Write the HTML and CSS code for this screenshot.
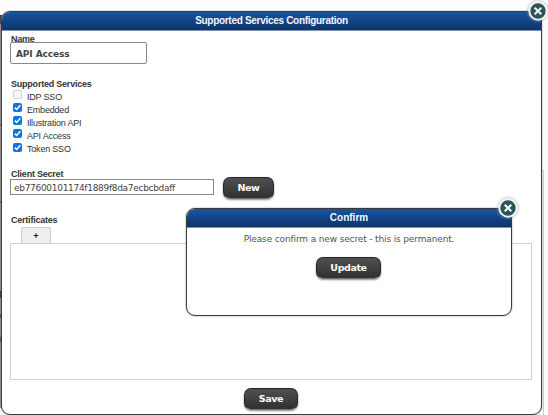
FILE: index.html
```html
<!DOCTYPE html>
<html lang="en">
<head>
<meta charset="utf-8">
<title>Supported Services Configuration</title>
<link rel="stylesheet" href="styles.css">
</head>
<body>
<div class="backdrop-left"></div>
<div class="backdrop-right"></div>
<main class="dialog">
  <header class="bar"><span class="title-main">Supported Services Configuration</span></header>
  <button class="close" aria-label="Close"><svg viewBox="0 0 20 20"><circle cx="10" cy="10" r="8.7"/><path d="M6.7 6.7l6.6 6.6M13.3 6.7l-6.6 6.6"/></svg></button>
  <form class="content">
    <section class="name">
      <label class="label">Name</label>
      <div class="field name-field"><span>API Access</span></div>
    </section>
    <section class="services">
      <div class="label">Supported Services</div>
      <div class="option"><i class="box off"></i><span>IDP SSO</span></div>
      <div class="option"><i class="box"><svg viewBox="0 0 9 9"><path d="M1.8 4.6l1.9 1.9 3.6-4.3"/></svg></i><span>Embedded</span></div>
      <div class="option"><i class="box"><svg viewBox="0 0 9 9"><path d="M1.8 4.6l1.9 1.9 3.6-4.3"/></svg></i><span>Illustration API</span></div>
      <div class="option"><i class="box"><svg viewBox="0 0 9 9"><path d="M1.8 4.6l1.9 1.9 3.6-4.3"/></svg></i><span>API Access</span></div>
      <div class="option"><i class="box"><svg viewBox="0 0 9 9"><path d="M1.8 4.6l1.9 1.9 3.6-4.3"/></svg></i><span>Token SSO</span></div>
    </section>
    <section class="secret">
      <div class="secret-col">
        <label class="label">Client Secret</label>
        <div class="field secret-field"><span>eb77600101174f1889f8da7ecbcbdaff</span></div>
      </div>
      <button type="button" class="btn new">New</button>
    </section>
    <section class="certs">
      <div class="label">Certificates</div>
      <div class="tab">+</div>
      <div class="panel"></div>
    </section>
    <button type="button" class="btn save">Save</button>
  </form>
</main>
<aside class="dialog confirm">
  <header class="bar"><span>Confirm</span></header>
  <button class="close" aria-label="Close"><svg viewBox="0 0 20 20"><circle cx="10" cy="10" r="8.7"/><path d="M6.7 6.7l6.6 6.6M13.3 6.7l-6.6 6.6"/></svg></button>
  <p class="message">Please confirm a new secret - this is permanent.</p>
  <button type="button" class="btn update">Update</button>
</aside>
</body>
</html>
```
FILE: styles.css
```css
* { box-sizing: border-box; }
body {
  margin: 0;
  height: 415px;
  padding: 11px 0 0 1px;
  overflow: hidden;
  position: relative;
  background: #fefefe;
  font: 9px/12px "Liberation Sans", Arial, sans-serif;
  color: #222;
}
button { margin: 0; padding: 0; border: 0; background: none; }
.backdrop-left {
  position: absolute;
  left: 0;
  top: 15px;
  width: 3px;
  height: 393px;
  background: linear-gradient(#333 0 9px, transparent 9px 109px, #555 109px 111px, transparent 111px 186px, #555 186px 188px, transparent 188px 276px, #222 276px 283px, transparent 283px 299px, #444 299px 303px, transparent 303px 322px, #444 322px 327px, transparent 327px), #8b8b8b;
}
.backdrop-right {
  position: absolute;
  left: 541px;
  top: 170px;
  width: 3px;
  height: 245px;
  border-top: 1px solid #ccc;
  border-right: 1px solid #ccc;
}
.dialog {
  position: relative;
  width: 541px;
  height: 404px;
  border: 1px solid #3a3a3a;
  border-radius: 9px 0 9px 9px;
  background: #fff;
  box-shadow: 0 0 2px #999;
}
.bar {
  height: 19px;
  border-radius: 8px 0 0 0;
  border-bottom: 1px solid #7f94b4;
  background: linear-gradient(#1a54a1, #0d3468);
  color: #f4f6fa;
  font-weight: bold;
  font-size: 10px;
  line-height: 18px;
  text-align: center;
}
.title-main { letter-spacing: -.3px; }
.close {
  position: absolute;
  right: -7px;
  top: -11px;
  width: 20px;
  height: 20px;
  border-radius: 50%;
  box-shadow: 0 0 3px #999;
}
.close svg { display: block; width: 20px; height: 20px; }
.close circle { fill: #2c545c; stroke: #f0f2f2; stroke-width: 2; }
.close path { stroke: #f4f6f6; stroke-width: 2; fill: none; }
.content { padding: 1px 9px 0 8px; display: flex; flex-direction: column; }
.label {
  display: block;
  height: 10px;
  padding-left: 1px;
  color: #333;
  font-weight: bold;
  line-height: 12px;
  letter-spacing: -.22px;
}
.field {
  display: flex;
  align-items: center;
  border: 1px solid #888;
  color: #444;
  font-family: "DejaVu Sans", Verdana, sans-serif;
}
.name { height: 46px; }
.name .label { line-height: 14px; }
.name-field { width: 137px; height: 22px; padding: 1px 0 0 5px; border-radius: 2px; font-weight: bold; letter-spacing: -.1px; }
.services { height: 90px; }
.option { height: 13.15px; display: flex; align-items: center; gap: 5px; padding-left: 3px; color: #333; letter-spacing: -.2px; }
.option span { padding-top: 4px; }
.box { width: 9px; height: 9px; border-radius: 2px; background: #0b75e8; }
.box.off { background: #f8f8f8; border: 1px solid #d2d2d2; }
.box svg { display: block; width: 9px; height: 9px; }
.box path { fill: none; stroke: #fff; stroke-width: 1.5; }
.secret { height: 46px; display: flex; gap: 9px; }
.secret-col { width: 204px; padding-top: 1px; }
.secret .label { height: 10px; line-height: 11px; }
.secret-field { height: 16px; padding: 1px 0 0 3px; letter-spacing: -.3px; }
.btn {
  flex: none;
  height: 22px;
  border: 1px solid #262626;
  border-bottom-color: #777;
  border-radius: 7px;
  background: linear-gradient(#505050, #303030);
  box-shadow: 0 1px 2px #888;
  color: #fff;
  font: bold 9.5px/20px "DejaVu Sans", Verdana, sans-serif;
  letter-spacing: -.4px;
  text-align: center;
}
.new { width: 51px; margin-top: 9px; }
.certs { height: 174px; }
.certs .label { height: 13px; line-height: 12px; }
.tab {
  width: 30px;
  height: 16px;
  margin-left: 11px;
  border: 1px solid #ccc;
  border-bottom: 0;
  border-radius: 3px 3px 0 0;
  background: #eee;
  text-align: center;
  font-weight: bold;
  line-height: 17px;
}
.panel { width: 522px; height: 137px; border: 1px solid #d0d0d0; }
.save { width: 54px; align-self: center; }
.confirm {
  position: absolute;
  left: 186px;
  top: 208px;
  width: 326px;
  height: 108px;
  display: flex;
  flex-direction: column;
  align-items: center;
}
.confirm .bar { width: 100%; }
.message { margin: 5px 0 0; color: #555; font: 9px/12px "DejaVu Sans", Verdana, sans-serif; letter-spacing: -.14px; white-space: nowrap; }
.update { width: 65px; margin: 12px 1px 0 0; }
```
